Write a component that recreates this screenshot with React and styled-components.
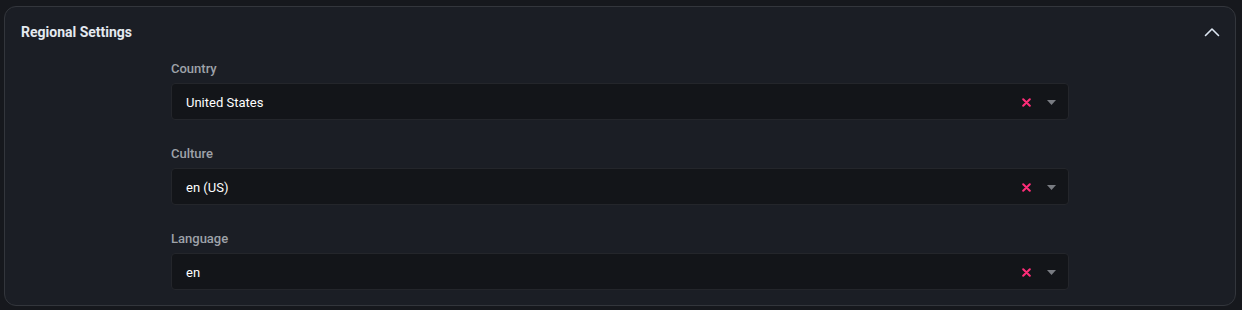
import React from 'react';
import styled, { createGlobalStyle } from 'styled-components';

const GlobalStyle = createGlobalStyle`
  html, body {
    margin: 0;
    padding: 0;
    background: #16181d;
    font-family: Roboto, "Liberation Sans", Arial, sans-serif;
  }
`;

const Card = styled.section`
  box-sizing: border-box;
  height: 300px;
  margin: 6px 6px 4px 4px;
  background: #1b1e25;
  border: 1px solid #33363c;
  border-radius: 12px;
  display: flex;
  flex-direction: column;
`;

const Header = styled.div`
  height: 49px;
  display: flex;
  align-items: center;
  justify-content: space-between;
  padding: 0 14px 0 16px;
`;

const Title = styled.h2`
  margin: 0;
  font-size: 14px;
  font-weight: 700;
  color: #e4e9f0;
`;

const ToggleButton = styled.button`
  background: none;
  border: 0;
  padding: 0;
  width: 18px;
  height: 18px;
  display: flex;
  align-items: center;
  justify-content: center;
  cursor: pointer;
`;

const Form = styled.div`
  width: 898px;
  margin: 3px auto 0;
  display: flex;
  flex-direction: column;
  gap: 24px;
`;

const Field = styled.div`
  display: flex;
  flex-direction: column;
  gap: 4px;
`;

const Label = styled.label`
  font-size: 13px;
  font-weight: 500;
  line-height: 20px;
  color: #9ea2a9;
`;

const Select = styled.div`
  box-sizing: border-box;
  height: 37px;
  display: flex;
  align-items: center;
  padding: 1px 7px 0 14px;
  background: #131519;
  border: 1px solid #24262b;
  border-radius: 4px;
`;

const Value = styled.span`
  flex: 1;
  font-size: 13px;
  color: #ffffff;
`;

const IconSlot = styled.span`
  width: 20px;
  height: 20px;
  display: flex;
  align-items: center;
  justify-content: center;
  margin-left: ${(p) => p.$gap || 0}px;
  cursor: pointer;
`;

const ChevronUp = () => (
  <svg width="16" height="10" viewBox="0 0 16 10" fill="none">
    <path d="M1.5 8.5 L8 2 L14.5 8.5" stroke="#dde6f2" strokeWidth="1.6" strokeLinecap="round" strokeLinejoin="round" />
  </svg>
);

const ClearIcon = () => (
  <svg width="9" height="9" viewBox="0 0 9 9" fill="none">
    <path d="M1.2 1.2 L7.8 7.8 M7.8 1.2 L1.2 7.8" stroke="#ff2d78" strokeWidth="2" strokeLinecap="round" />
  </svg>
);

const Caret = () => (
  <svg width="9" height="5" viewBox="0 0 9 5">
    <path d="M0 0 H9 L4.5 5 Z" fill="#797c82" />
  </svg>
);

const fields = [
  { label: 'Country', value: 'United States' },
  { label: 'Culture', value: 'en (US)' },
  { label: 'Language', value: 'en' },
];

const App = () => (
  <>
    <GlobalStyle />
    <Card>
      <Header>
        <Title>Regional Settings</Title>
        <ToggleButton aria-label="Collapse">
          <ChevronUp />
        </ToggleButton>
      </Header>
      <Form>
        {fields.map((f) => (
          <Field key={f.label}>
            <Label>{f.label}</Label>
            <Select>
              <Value>{f.value}</Value>
              <IconSlot>
                <ClearIcon />
              </IconSlot>
              <IconSlot $gap={5}>
                <Caret />
              </IconSlot>
            </Select>
          </Field>
        ))}
      </Form>
    </Card>
  </>
);

export default App;
